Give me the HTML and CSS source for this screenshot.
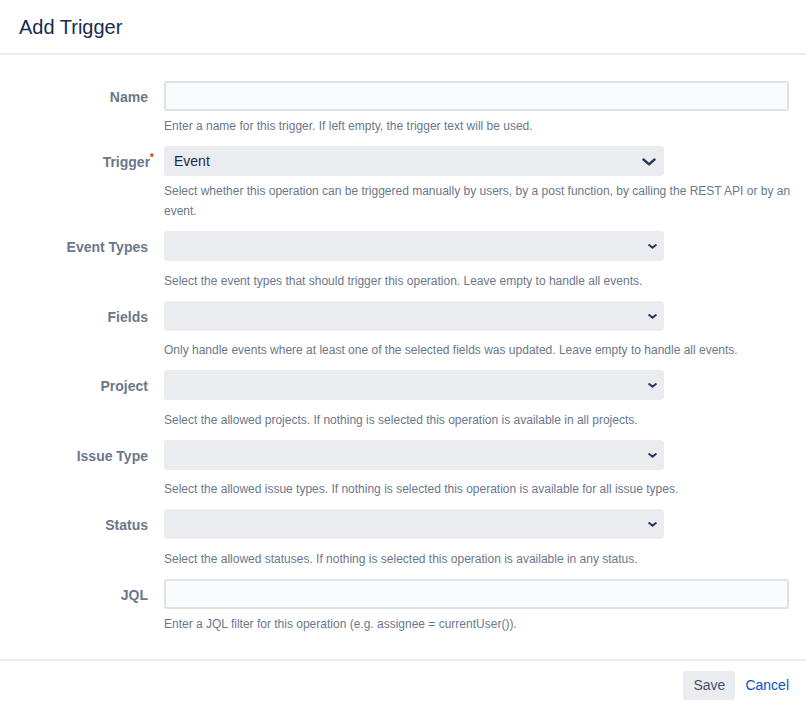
FILE: index.html
```html
<!DOCTYPE html>
<html lang="en">
<head>
  <meta charset="UTF-8" />
  <meta name="viewport" content="width=device-width, initial-scale=1.0" />
  <title>Add Trigger</title>
  <link rel="stylesheet" href="styles.css">
</head>
<body>
  <div class="dialog-header">
    <h1>Add Trigger</h1>
  </div>

  <form class="trigger-form">
    <label class="field-label">Name</label>
    <div class="field">
      <div class="text-input"></div>
      <div class="help">Enter a name for this trigger. If left empty, the trigger text will be used.</div>
    </div>

    <label class="field-label">Trigger<span class="req">*</span></label>
    <div class="field">
      <div class="select">
        <span>Event</span>
        <svg class="chevron" width="14" height="8" viewBox="0 0 14 8"><path d="M1.5 1.5 L7 6.3 L12.5 1.5" fill="none" stroke="#253858" stroke-width="2.4" stroke-linecap="round" stroke-linejoin="round"/></svg>
      </div>
      <div class="help">Select whether this operation can be triggered manually by users, by a post function, by calling the REST API or by an event.</div>
    </div>

    <label class="field-label">Event Types</label>
    <div class="field">
      <div class="select multi">
        <span></span>
        <svg class="chevron-sm" width="9" height="5" viewBox="0 0 9 5"><path d="M1.2 1.1 L4.5 3.8 L7.8 1.1" fill="none" stroke="#253858" stroke-width="2" stroke-linecap="round" stroke-linejoin="round"/></svg>
      </div>
      <div class="help">Select the event types that should trigger this operation. Leave empty to handle all events.</div>
    </div>

    <label class="field-label">Fields</label>
    <div class="field">
      <div class="select multi">
        <span></span>
        <svg class="chevron-sm" width="9" height="5" viewBox="0 0 9 5"><path d="M1.2 1.1 L4.5 3.8 L7.8 1.1" fill="none" stroke="#253858" stroke-width="2" stroke-linecap="round" stroke-linejoin="round"/></svg>
      </div>
      <div class="help">Only handle events where at least one of the selected fields was updated. Leave empty to handle all events.</div>
    </div>

    <label class="field-label">Project</label>
    <div class="field">
      <div class="select multi">
        <span></span>
        <svg class="chevron-sm" width="9" height="5" viewBox="0 0 9 5"><path d="M1.2 1.1 L4.5 3.8 L7.8 1.1" fill="none" stroke="#253858" stroke-width="2" stroke-linecap="round" stroke-linejoin="round"/></svg>
      </div>
      <div class="help">Select the allowed projects. If nothing is selected this operation is available in all projects.</div>
    </div>

    <label class="field-label">Issue Type</label>
    <div class="field">
      <div class="select multi">
        <span></span>
        <svg class="chevron-sm" width="9" height="5" viewBox="0 0 9 5"><path d="M1.2 1.1 L4.5 3.8 L7.8 1.1" fill="none" stroke="#253858" stroke-width="2" stroke-linecap="round" stroke-linejoin="round"/></svg>
      </div>
      <div class="help">Select the allowed issue types. If nothing is selected this operation is available for all issue types.</div>
    </div>

    <label class="field-label">Status</label>
    <div class="field">
      <div class="select multi">
        <span></span>
        <svg class="chevron-sm" width="9" height="5" viewBox="0 0 9 5"><path d="M1.2 1.1 L4.5 3.8 L7.8 1.1" fill="none" stroke="#253858" stroke-width="2" stroke-linecap="round" stroke-linejoin="round"/></svg>
      </div>
      <div class="help">Select the allowed statuses. If nothing is selected this operation is available in any status.</div>
    </div>

    <label class="field-label">JQL</label>
    <div class="field">
      <div class="text-input"></div>
      <div class="help">Enter a JQL filter for this operation (e.g. assignee = currentUser()).</div>
    </div>
  </form>

  <div class="dialog-footer">
    <button class="btn">Save</button>
    <a class="link" href="#">Cancel</a>
  </div>
</body>
</html>
```

FILE: styles.css
```css
body {
  margin: 0;
  font-family: "Liberation Sans", Arial, sans-serif;
  color: #172b4d;
  background-color: #fff;
}

.dialog-header {
  height: 55px;
  padding: 2px 19px 0;
  box-sizing: border-box;
  display: flex;
  align-items: center;
  border-bottom: 2px solid #ebecf0;
}

.dialog-header h1 {
  margin: 0;
  font-size: 20px;
  font-weight: normal;
  color: #172b4d;
}

.trigger-form {
  display: grid;
  grid-template-columns: 148px 1fr;
  column-gap: 16px;
  row-gap: 10px;
  padding: 26px 17px 25px 0;
}

.field-label {
  text-align: right;
  font-size: 14px;
  font-weight: bold;
  line-height: 30px;
  padding-top: 1px;
  color: #6b778c;
}

.req {
  color: #de350b;
  font-size: 10px;
  vertical-align: top;
  line-height: 22px;
  margin-right: -6px;
}

.text-input {
  height: 30px;
  box-sizing: border-box;
  border: 2px solid #dfe1e6;
  border-radius: 3px;
  background-color: #fafbfc;
}

.select {
  width: 500px;
  height: 30px;
  box-sizing: border-box;
  padding: 0 8px 0 10px;
  display: flex;
  align-items: center;
  justify-content: space-between;
  border-radius: 3px;
  background-color: #ebecf0;
  font-size: 14px;
  color: #172b4d;
}

.select.multi {
  padding-right: 7px;
}

.chevron,
.chevron-sm {
  margin-top: 1px;
}

.help {
  margin-top: 5px;
  margin-right: -16px;
  font-size: 12px;
  line-height: 20px;
  color: #6b778c;
}

.select.multi + .help {
  margin-top: 9.6px;
}

.dialog-footer {
  display: flex;
  justify-content: flex-end;
  align-items: center;
  gap: 10px;
  padding: 10px 17px;
  border-top: 2px solid #ebecf0;
}

.btn {
  height: 29px;
  padding: 0 10px;
  border: none;
  border-radius: 3px;
  background-color: #ebecf0;
  font-family: inherit;
  font-size: 14px;
  color: #42526e;
  cursor: pointer;
}

.link {
  font-size: 14px;
  color: #0052cc;
  text-decoration: none;
}
```
